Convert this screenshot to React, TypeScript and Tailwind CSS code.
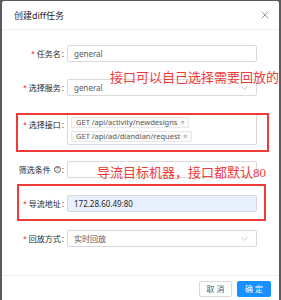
import React from "react";

const font = { fontFamily: '"Noto Sans", "Noto Sans CJK SC", sans-serif' };

function Label({ text, required = true, help = false }: { text: string; required?: boolean; help?: boolean }) {
  return (
    <div className="w-[64px] shrink-0 flex items-center justify-end pr-[2px] text-[8px] leading-[10px] text-[#262626]">
      {required && <span className="text-[#f5222d] mr-[2px] text-[7px]">*</span>}
      <span>{text}</span>
      {help && (
        <span className="ml-[3px] inline-flex w-[7px] h-[7px] rounded-full border border-[#595959] items-center justify-center text-[5px] leading-none">?</span>
      )}
      <span className="ml-[1px]">:</span>
    </div>
  );
}

function Chevron() {
  return (
    <svg width="7" height="5" viewBox="0 0 7 5" className="absolute right-[8px] top-1/2 -translate-y-1/2">
      <path d="M0.5 0.8 L3.5 4 L6.5 0.8" fill="none" stroke="#bfbfbf" strokeWidth="0.8" />
    </svg>
  );
}

function Tag({ text }: { text: string }) {
  return (
    <div className="h-[11px] px-[4px] flex items-center bg-[#fafafa] border border-[#e8e8e8] rounded-[1px] text-[7.5px] leading-none text-[#595959] self-start">
      <span>{text}</span>
      <span className="ml-[3px] text-[#8c8c8c] text-[7px]">×</span>
    </div>
  );
}

export default function App() {
  return (
    <div className="w-[281px] h-[300px] bg-[#5a5a5a] overflow-hidden relative pt-px px-[2px]" style={font}>
      <div className="bg-white h-[320px] relative rounded-t-[2px]">
        {/* header */}
        <div className="h-[29px] flex items-center justify-between pl-[12px] pr-[10px] border-b border-[#f0f0f0]">
          <span className="text-[9px] text-[#262626] leading-none">创建diff任务</span>
          <svg width="8" height="8" viewBox="0 0 8 8">
            <path d="M0.5 0.5 L7.5 7.5 M7.5 0.5 L0.5 7.5" stroke="#8c8c8c" strokeWidth="0.9" />
          </svg>
        </div>

        {/* body */}
        <div className="pt-[15px] flex flex-col">
          <div className="flex items-center mb-[17px]">
            <Label text="任务名" />
            <div className="ml-[1px] w-[190px] h-[17px] border border-[#d9d9d9] rounded-[2px] flex items-center pl-[6px] text-[8px] text-[#595959]">
              general
            </div>
          </div>

          <div className="flex items-center mb-[18px]">
            <Label text="选择服务" />
            <div className="relative ml-[1px] w-[190px] h-[17px] border border-[#d9d9d9] rounded-[2px] flex items-center pl-[6px] text-[8px] text-[#595959]">
              general
              <Chevron />
            </div>
          </div>

          <div className="flex items-start mb-[16px]">
            <div className="pt-[6px]">
              <Label text="选择接口" />
            </div>
            <div className="ml-[1px] w-[190px] h-[31px] border border-[#d9d9d9] rounded-[2px] flex flex-col gap-[3px] pl-[3px] pt-[2px]">
              <Tag text="GET /api/activity/newdesigns" />
              <Tag text="GET /api/ad/diandian/request" />
            </div>
          </div>

          <div className="flex items-center mb-[17px]">
            <Label text="筛选条件" required={false} help />
            <div className="ml-[1px] w-[190px] h-[17px] border border-[#d9d9d9] rounded-[2px]" />
          </div>

          <div className="flex items-center mb-[18px]">
            <Label text="导流地址" />
            <div className="ml-[1px] w-[190px] h-[17px] border border-[#d9d9d9] rounded-[2px] bg-[#e8f0fe] flex items-center pl-[6px] text-[8px] text-[#262626]">
              172.28.60.49:80
            </div>
          </div>

          <div className="flex items-center mb-[28px]">
            <Label text="回放方式" />
            <div className="relative ml-[1px] w-[190px] h-[17px] border border-[#d9d9d9] rounded-[2px] flex items-center pl-[6px] text-[8px] text-[#595959]">
              实时回放
              <Chevron />
            </div>
          </div>
        </div>

        {/* footer */}
        <div className="border-t border-[#f0f0f0] pt-[5px] pr-[8px] flex justify-end gap-[5px]">
          <button className="w-[33px] h-[16px] border border-[#d9d9d9] rounded-[2px] bg-white text-[8px] text-[#595959] tracking-[2px] pl-[2px] leading-none">
            取消
          </button>
          <button className="w-[34px] h-[16px] rounded-[2px] bg-[#1890ff] text-[8px] text-white tracking-[2px] pl-[2px] leading-none">
            确定
          </button>
        </div>

        {/* annotations */}
        <div className="absolute left-[14px] top-[112px] w-[253px] h-[39px] border-2 border-[#f03a3a] pointer-events-none" />
        <div className="absolute left-[15px] top-[183px] w-[249px] h-[37px] border-2 border-[#f03a3a] pointer-events-none" />
        <div className="absolute left-[108px] top-[69px] text-[13px] leading-[16px] text-[#f03a3a] whitespace-nowrap font-['Liberation_Serif','Noto_Sans_CJK_SC',serif]">
          接口可以自己选择需要回放的
        </div>
        <div className="absolute left-[95px] top-[164px] text-[13px] leading-[16px] text-[#f03a3a] whitespace-nowrap font-['Liberation_Serif','Noto_Sans_CJK_SC',serif]">
          导流目标机器，接口都默认80
        </div>
      </div>
    </div>
  );
}
